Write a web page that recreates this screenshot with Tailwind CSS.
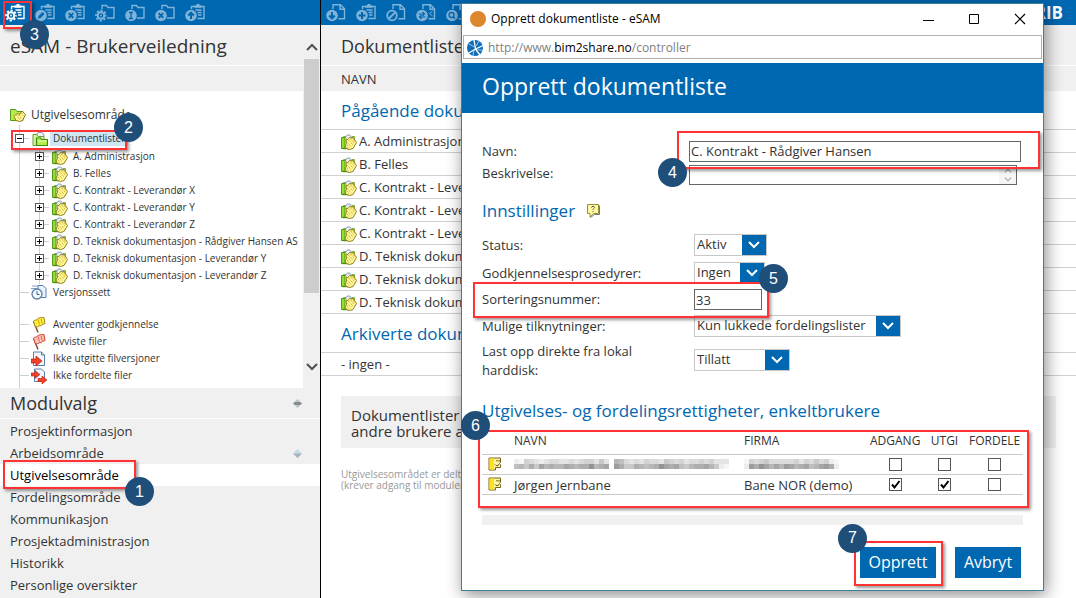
<!DOCTYPE html>
<html lang="no">
<head>
<meta charset="utf-8">
<meta name="viewport" content="width=device-width, initial-scale=1">
<title>eSAM - Brukerveiledning</title>
<script src="https://cdn.jsdelivr.net/npm/@tailwindcss/browser@4"></script>
</head>
<body class="relative flex h-screen overflow-hidden bg-white font-['Open_Sans','Noto_Sans',sans-serif] text-[13px] text-[#333]">

<svg class="hidden" aria-hidden="true">
  <!-- toolbar bases -->
  <symbol id="clip" viewBox="0 0 20 18">
    <path d="M6.500 5V2.500h12.500v12h-6.500" fill="none" stroke="currentColor" stroke-width="1.400"/>
    <path d="M9.500 3.800V1.500h2V0h3v1.500h2v2.300z" fill="currentColor"/>
    <path d="M10.500 6h6M12.500 8.500h4M13 11h3.500" stroke="currentColor" stroke-width="1.300"/>
  </symbol>
  <symbol id="fold" viewBox="0 0 20 18">
    <path d="M7 5V1.500h4.500l1.500 2h6v10.500h-7" fill="none" stroke="currentColor" stroke-width="1.400"/>
  </symbol>
  <symbol id="page" viewBox="0 0 20 18">
    <path d="M7 5V.700h7.500l4 4v10h-6M14 .700v4.500h4.500" fill="none" stroke="currentColor" stroke-width="1.400"/>
  </symbol>
  <symbol id="disc" viewBox="0 0 20 18">
    <circle cx="6" cy="11.500" r="6.500" fill="#0067b1"/><circle cx="6" cy="11.500" r="5.800" fill="currentColor"/>
  </symbol>
  <symbol id="gear" viewBox="0 0 20 18">
    <circle cx="6" cy="11.500" r="6.500" fill="#0067b1"/>
    <circle cx="6" cy="11.500" r="5" fill="none" stroke="currentColor" stroke-width="1.800" stroke-dasharray="2.200 1.727" stroke-dashoffset="1.100"/>
    <circle cx="6" cy="11.500" r="3.300" fill="none" stroke="currentColor" stroke-width="2"/>
    <circle cx="6" cy="11.500" r=".9" fill="currentColor"/>
  </symbol>
  <symbol id="gx" viewBox="0 0 20 18"><path d="M3.700 9.200l4.600 4.600M8.300 9.200l-4.600 4.600" stroke="#0067b1" stroke-width="1.900"/></symbol>

  <!-- green folder with open yellow hand -->
  <symbol id="hand" viewBox="0 0 16 16">
    <path d="M2.500 4V2.500H5M11 2.500h2.500V5" fill="none" stroke="#7fb04a"/>
    <path d="M4.500 4C4.500 0 10.500 0 10.500 4" fill="#e6eef3" stroke="#7c93a8"/>
    <path d="M.500 3.500h3.500v11H.500z" fill="#8fe02c" stroke="#58961c"/>
    <path d="M1.500 14.500h6" stroke="#4b8a17" stroke-width="1.400"/>
    <path d="M4 12l1.500-2.500-.5-4.500 2 .5 1.500-2 2 .5 1.500-1 1 2 2.500 3.500-3.500 6-3.500 1-3-1z" fill="#fff7a0" stroke="#8f7f10" stroke-width="1"/>
    <path d="M7.500 6l4.500 5M9.500 5l4 4.500M6.500 8.500l4 4.500M11.500 4.500l2.500 3.500M6 11l2 2.500" stroke="#c9aa10" stroke-width="1" stroke-dasharray="1.200 .8"/>
  </symbol>
  <symbol id="folderopen" viewBox="0 0 16 16">
    <path d="M4 5C4 0 12 0 12 5" fill="#eef3f6" stroke="#7c93a8"/>
    <path d="M1 3.500h4l1 2h6v3H6l-1 6H1z" fill="#d4f59a" stroke="#6a9a3c"/>
    <path d="M4.500 14.500v-7.500h4l1 1.500h6v6z" fill="#b5f04a" stroke="#3f8a10" stroke-width="1.200"/>
    <path d="M6 10h8.500" stroke="#eaffc4"/>
  </symbol>
  <symbol id="rootf" viewBox="0 0 16 16">
    <path d="M.500 13.500v-11h5l1.500 2h6v9z" fill="#b5e94c" stroke="#58961c"/>
    <path d="M6 13.500l-2-4 3-3 2.500 1 2.500-3.500 3.500 3.500-3 6-3 1z" fill="#fff6a0" stroke="#8f7f10"/>
    <path d="M6.500 8l3.500 5M9 8l2.500 4M11.500 6l2 3" stroke="#c9aa10" stroke-dasharray="1.200 .8"/>
  </symbol>
  <symbol id="chev" viewBox="0 0 12 8"><path d="M1 1l5 5 5-5" fill="none" stroke="currentColor" stroke-width="2"/></symbol>
  <symbol id="face" viewBox="0 0 14 14">
    <path d="M1 1h11.500v4l-1 1.500 1 1.500v2.500h-5v2.500H1z" fill="#fff7a8" stroke="#7a6412"/>
    <path d="M1.500 1.500h4.500v11H1.500z" fill="#ffe020"/>
    <path d="M9 3v1.500M11 3v1.500M7 7.500c1 1.500 2.500 1.500 4 0" fill="none" stroke="#4c3d08"/>
  </symbol>
</svg>

<!-- Left pane -->
<aside class="flex w-[321px] shrink-0 flex-col border-r border-black bg-[#f0f0f0]">
  <div class="relative z-10 flex h-[25px] shrink-0 items-center gap-[10px] bg-[#0067b1] pl-[5px] text-[#7fb3d8]">
    <button aria-label="Opprett dokumentliste" class="text-white"><svg class="h-[18px] w-5"><use href="#clip"/><use href="#gear"/></svg></button>
    <button aria-label="Rediger"><svg class="h-[18px] w-5"><use href="#clip"/><use href="#disc"/><path d="M2.800 14.700l.8-2.800L7.500 8l2 2-3.900 3.900z" fill="#0067b1"/></svg></button>
    <button aria-label="Slett liste"><svg class="h-[18px] w-5"><use href="#clip"/><use href="#disc"/><use href="#gx"/></svg></button>
    <button aria-label="Mappeinnstillinger"><svg class="h-[18px] w-5"><use href="#fold"/><use href="#gear"/></svg></button>
    <button aria-label="Gi nytt navn"><svg class="h-[18px] w-5"><use href="#fold"/><use href="#disc"/><path d="M4 8.500h4M4 14.500h4M6 8.500v6" stroke="#0067b1" stroke-width="1.300"/></svg></button>
    <button aria-label="Slett mappe"><svg class="h-[18px] w-5"><use href="#fold"/><use href="#disc"/><use href="#gx"/></svg></button>
    <button aria-label="Last opp"><svg class="h-[18px] w-5"><use href="#clip"/><use href="#disc"/><path d="M6 15V9.500M3.200 11.500L6 8.700l2.800 2.800" fill="none" stroke="#0067b1" stroke-width="2"/></svg></button>
    <div class="absolute top-px left-[3px] h-7 w-[29px] border-2 border-[#f33] shadow-[2px_2px_3px_rgba(0,0,0,.4)]">
      <span class="absolute -right-[19px] -bottom-[22px] flex size-[29px] items-center justify-center rounded-full bg-[#1f4e79] font-['Liberation_Sans',sans-serif] text-[16px] text-white">3</span>
    </div>
  </div>

  <div class="flex h-[363px] shrink-0">
    <div class="flex min-w-0 flex-1 flex-col bg-white">
      <h1 class="flex h-10 shrink-0 items-center bg-[#f0f0f0] pt-[2px] pl-[10px] text-[19px] whitespace-nowrap">eSAM - Brukerveiledning</h1>
      <div class="mt-px h-[25px] shrink-0 bg-[#f0f0f0]"></div>
      <div class="flex flex-1 flex-col pt-3">
        <div class="flex h-[22px] shrink-0 items-center pt-px pl-[10px] text-[12px]"><svg class="mr-[5px] size-4"><use href="#rootf"/></svg>Utgivelsesområde</div>
        <ul class="ml-[19px] flex-1 border-l border-[#c5d3d6] text-[10px] whitespace-nowrap">
          <li>
            <div class="relative flex h-[23px] items-center pt-1">
              <button aria-label="Lukk" class="-ml-[5px] grid size-[9px] place-items-center border border-[#556] bg-white"><span class="h-px w-[5px] bg-black"></span></button>
              <span class="mr-[3px] h-px w-[5px] bg-[#c5d3d6]"></span>
              <svg class="mr-[2px] size-4"><use href="#folderopen"/></svg>
              <span class="bg-[#cfe6f3] px-[3px] text-[10px]">Dokumentlister</span>
              <div class="absolute top-[5px] -left-[9px] h-5 w-[116px] border-2 border-[#f33] shadow-[2px_2px_3px_rgba(0,0,0,.4)]">
                <span class="absolute -top-[19px] -right-[18px] flex size-[29px] items-center justify-center rounded-full bg-[#1f4e79] font-['Liberation_Sans',sans-serif] text-[16px] text-white">2</span>
              </div>
            </div>
            <ul id="tree" class="ml-[19px] border-l border-[#c5d3d6]"></ul>
          </li>
          <li class="flex h-4 items-center"><span class="mr-[2px] h-px w-[9px] bg-[#c5d3d6]"></span>
            <svg class="mr-[6px] size-4" viewBox="0 0 16 16"><path d="M7 1.500h5l3 3v9H7z" fill="#eaf2fb" stroke="#5d7da8"/><path d="M1 2h6M0 4.500h6" stroke="#7ea2cc"/><circle cx="6" cy="10" r="5" fill="#f4faff" stroke="#5d7da8" stroke-width="1.300"/><path d="M6 7v3.500h2.500" fill="none" stroke="#3c5f93"/></svg>Versjonssett</li>
          <li class="mt-4 flex h-[17px] items-center"><span class="mr-[2px] h-px w-[9px] bg-[#c5d3d6]"></span>
            <svg class="mr-[6px] size-4" viewBox="0 0 16 16"><path d="M2.500 4l4.500 11.500" stroke="#7a5a18" stroke-width="1.500"/><path d="M2.500 4.500c1-2 3-1 4-2.500s2-.5 3-1.500 2 .5 3.500 0l1 6c-1.500 1-2 0-3 1.500s-2 0-3 1-2 .5-3.500 1z" fill="#ffee3a" stroke="#a5841a"/><path d="M7 2.500l1.500 5M10 1.500l1.200 5" stroke="#c9a81c"/></svg>Avventer godkjennelse</li>
          <li class="flex h-[17px] items-center"><span class="mr-[2px] h-px w-[9px] bg-[#c5d3d6]"></span>
            <svg class="mr-[6px] size-4" viewBox="0 0 16 16"><path d="M2.500 4l4.500 11.500" stroke="#8a4a30" stroke-width="1.500"/><path d="M2.500 4.500c1-2 3-1 4-2.500s2-.5 3-1.500 2 .5 3.500 0l1 6c-1.500 1-2 0-3 1.500s-2 0-3 1-2 .5-3.500 1z" fill="#ffc2b8" stroke="#d0402c"/><path d="M7 2.500l1.500 5M10 1.500l1.200 5" stroke="#e0604c"/></svg>Avviste filer</li>
          <li class="flex h-[17px] items-center"><span class="mr-[2px] h-px w-[9px] bg-[#c5d3d6]"></span>
            <svg class="mr-[6px] size-4" viewBox="0 0 16 16"><path d="M2.500 1h8l3 3v10.500h-11z" fill="#f2f7fd" stroke="#5d7da8"/><path d="M10.500 1v3h3" fill="none" stroke="#5d7da8"/><path d="M0 8h5V5l6 5-6 5v-3H0z" fill="#f3402a" stroke="#b81e0e" stroke-width=".7"/></svg>Ikke utgitte filversjoner</li>
          <li class="flex h-[17px] items-center"><span class="mr-[2px] h-px w-[9px] bg-[#c5d3d6]"></span>
            <svg class="mr-[6px] size-4" viewBox="0 0 16 16"><path d="M3.500 1h7l3 3v9.500h-10z" fill="#f2f7fd" stroke="#5d7da8"/><path d="M0 5h4V2.500L9 6.500l-5 4V8H0zM7 10.500h4V8l5 4-5 4v-2.500H7z" fill="#f3402a" stroke="#b81e0e" stroke-width=".6"/></svg>Ikke fordelte filer</li>
        </ul>
      </div>
    </div>
    <!-- scroll bar -->
    <div class="flex w-[17px] shrink-0 flex-col items-center bg-[#f0f0f0] pt-[18px] pb-[17px] text-[#505050]">
      <svg class="h-2 w-3 rotate-180"><use href="#chev"/></svg>
      <div class="mt-2 h-[234px] w-[15px] bg-[#cdcdcd]"></div>
      <svg class="mt-auto h-2 w-3"><use href="#chev"/></svg>
    </div>
  </div>

  <h2 class="flex h-[31px] shrink-0 items-center justify-between border-b border-white pt-px pr-[18px] pl-[10px] text-[18px]">Modulvalg
    <svg class="h-[9px] w-[9px]" viewBox="0 0 9 9"><path d="M4.500 0L9 4.500 4.500 9 0 4.500z" fill="#b5c4cb"/><path d="M0 4.500L2 3h5l2 1.500L7 6H2z" fill="#8b8b8b"/></svg>
  </h2>
  <nav class="flex flex-col pt-[1px] leading-[22px]">
    <a href="#" class="pl-[10px]">Prosjektinformasjon</a>
    <a href="#" class="flex items-center justify-between pr-[18px] pl-[10px]">Arbeidsområde
      <svg class="h-[9px] w-[9px]" viewBox="0 0 9 9"><path d="M4.500 0L9 4.500H0z" fill="#c3dbe5"/><path d="M4.500 9L9 4.500H0z" fill="#9fb4be"/></svg></a>
    <a href="#" class="relative bg-white pl-[10px] text-black">Utgivelsesområde
      <span class="absolute -top-[4px] left-[3px] h-[29px] w-[133px] border-2 border-[#f33] shadow-[2px_2px_3px_rgba(0,0,0,.4)]">
        <span class="absolute -right-[20px] -bottom-[19px] flex size-[29px] items-center justify-center rounded-full bg-[#1f4e79] font-['Liberation_Sans',sans-serif] text-[16px] text-white">1</span>
      </span></a>
    <a href="#" class="pl-[10px]">Fordelingsområde</a>
    <a href="#" class="pl-[10px]">Kommunikasjon</a>
    <a href="#" class="pl-[10px]">Prosjektadministrasjon</a>
    <a href="#" class="pl-[10px]">Historikk</a>
    <a href="#" class="pl-[10px]">Personlige oversikter</a>
  </nav>
</aside>

<!-- Main pane -->
<main class="flex min-w-0 flex-1 flex-col">
  <div class="flex h-[25px] shrink-0 items-center gap-[10px] bg-[#0067b1] pl-[5px] text-[#7fb3d8]">
    <button aria-label="Last ned"><svg class="h-[18px] w-5"><use href="#page"/><use href="#disc"/><path d="M6 8v5.500M3.200 11.500L6 14.300l2.800-2.800" fill="none" stroke="#0067b1" stroke-width="2"/></svg></button>
    <button aria-label="Ny"><svg class="h-[18px] w-5"><use href="#clip"/><use href="#disc"/><path d="M6 8v7M2.500 11.500h7" stroke="#0067b1" stroke-width="2"/></svg></button>
    <button aria-label="Sperr"><svg class="h-[18px] w-5"><use href="#page"/><circle cx="6" cy="11.500" r="6.500" fill="#0067b1"/><circle cx="6" cy="11.500" r="4.800" fill="none" stroke="currentColor" stroke-width="1.800"/><path d="M3 14.500l6-6" stroke="currentColor" stroke-width="1.800"/></svg></button>
    <button aria-label="Bytt"><svg class="h-[18px] w-5"><use href="#page"/><use href="#disc"/><path d="M2.500 10H8M6.500 8l2 2-2 2M9.500 13H4M5.500 11l-2 2 2 2" fill="none" stroke="#0067b1" stroke-width="1.200"/><path d="M16.500 7l-3 2.500 3 2.500" fill="none" stroke="currentColor"/></svg></button>
    <button aria-label="Søk"><svg class="h-[18px] w-5"><use href="#page"/><use href="#disc"/><circle cx="5.500" cy="11" r="2.500" fill="none" stroke="#0067b1" stroke-width="1.300"/><path d="M7 12.500l2 2" stroke="#0067b1" stroke-width="1.500"/></svg></button>
    <span class="mr-[13px] ml-auto text-[17px] leading-none font-bold text-white">RIB</span>
  </div>
  <h2 class="flex h-10 shrink-0 items-center bg-[#f0f0f0] pt-[2px] pl-5 text-[18px]">Dokumentlister</h2>
  <div class="mt-px flex h-[25px] shrink-0 items-center bg-[#f0f0f0] pt-[2px] pl-5">NAVN</div>
  <h3 class="flex h-[39px] shrink-0 items-center border-b border-[#d0d0d0] pt-[2px] pl-5 text-[17px] text-[#0067b1]">Pågående dokumentlister</h3>
  <ul id="lists"></ul>
  <h3 class="flex h-[39px] shrink-0 items-center border-b border-[#d0d0d0] pt-[2px] pl-5 text-[17px] text-[#0067b1]">Arkiverte dokumentlister</h3>
  <p class="flex h-[23px] shrink-0 items-center border-b border-[#d0d0d0] pt-[2px] pl-5">- ingen -</p>
  <p class="mt-5 mr-5 ml-5 flex h-[52px] shrink-0 flex-col justify-center bg-[#f0f0f0] pt-[2px] pl-[10px] text-[15px] leading-4">Dokumentlister er synlige for<br>andre brukere av området</p>
  <p class="mt-[21px] pl-5 text-[10px] leading-[11px] text-[#999]">Utgivelsesområdet er delt<br>(krever adgang til modulen)</p>
</main>

<!-- Pop-up window -->
<section role="dialog" aria-label="Opprett dokumentliste" class="absolute top-[3px] left-[461px] z-20 flex h-[588px] w-[583px] flex-col border border-[#3d7f99] bg-white shadow-[2px_4px_16px_rgba(0,0,0,.45)]">
  <header class="flex h-[31px] shrink-0 items-center pr-[17px] pb-px pl-2 text-[12px] text-black">
    <span class="mr-[5px] size-4 rounded-full bg-[#dc862e]"></span>Opprett dokumentliste - eSAM
    <button aria-label="Minimer" class="mr-[35px] ml-auto"><svg class="size-[11px]"><path d="M0 6.500h11" stroke="#000"/></svg></button>
    <button aria-label="Maksimer" class="mr-[34px]"><svg class="size-[11px]"><path d="M.500 .500h9v9h-9z" fill="none" stroke="#000"/></svg></button>
    <button aria-label="Lukk vindu"><svg class="size-3"><path d="M1 1l10 10M11 1L1 11" stroke="#000" stroke-width="1.200"/></svg></button>
  </header>
  <div class="mx-[1px] flex h-6 shrink-0 items-center border border-[#b0b0b0] pt-px pl-[3px] text-[12px] text-[#808080]">
    <svg class="mr-[5px] size-4" viewBox="0 0 16 16"><circle cx="8" cy="8" r="8" fill="#0f6cb5"/><path d="M8.500 9L7 0M8.500 9L16 5.500M8.500 9L1 13.500M8.500 9l4.500 6" stroke="#fff" stroke-width="1.300"/><path d="M7.500 7L2 4M7 10l-1 6M10.500 9.500l5.500 1M9 6l3-5" stroke="#cfe2f2" stroke-width=".8"/></svg>
    <span>http://www.<span class="text-black">bim2share.no</span>/controller</span>
  </div>
  <h2 class="mt-1 flex h-[50px] shrink-0 items-center bg-[#0067b1] pb-1 pl-5 text-[23px] text-white">Opprett dokumentliste</h2>

  <form class="flex flex-1 flex-col px-5" onsubmit="return false">
    <div class="relative mt-[27px] flex h-[22px] items-center">
      <label for="navn" class="w-[207px] shrink-0 pt-px">Navn:</label>
      <input id="navn" type="text" value="C. Kontrakt - Rådgiver Hansen" class="h-[21px] w-[332px] border border-[#666] px-px">
      <div class="pointer-events-none absolute -top-[9px] left-[195px] z-10 h-[38px] w-[363px] border-2 border-[#f33] shadow-[2px_2px_3px_rgba(0,0,0,.4)]">
        <span class="absolute -bottom-[20px] -left-[21px] flex size-[29px] items-center justify-center rounded-full bg-[#1f4e79] font-['Liberation_Sans',sans-serif] text-[16px] text-white">4</span>
      </div>
    </div>
    <div class="mt-[3px] flex h-[21px] items-start">
      <label for="besk" class="w-[207px] shrink-0 leading-4">Beskrivelse:</label>
      <div class="flex h-5 w-[328px] border border-[#666]">
        <textarea id="besk" class="h-full min-w-0 flex-1 resize-none overflow-hidden"></textarea>
        <div class="flex w-[17px] flex-col items-center justify-between bg-[#f5f5f5] py-[2px] text-[#b0b0b0]"><svg class="h-[5px] w-2 rotate-180"><use href="#chev"/></svg><svg class="h-[5px] w-2"><use href="#chev"/></svg></div>
      </div>
    </div>
    <h3 class="mt-3 flex h-[26px] items-center text-[17px] text-[#0067b1]">Innstillinger
      <svg class="ml-3 h-[14px] w-[13px]" viewBox="0 0 13 14"><path d="M.500 .500h11v9H6.500l-3.500 3.500v-3.500H.500z" fill="#fff9a0" stroke="#9a8c3c"/><path d="M3.500 13.500l4-3h5V1.500" fill="none" stroke="#555" stroke-width=".8"/><path d="M4.500 3.500c0-1.500 3-1.500 3 0 0 1-1.500 1-1.500 2.200M6 7v1" fill="none" stroke="#555"/></svg>
    </h3>
    <div class="mt-[10px] flex h-[22px] items-center">
      <label for="status" class="w-[212px] pt-px">Status:</label>
      <span class="relative h-[22px] w-[73px] border border-[#c8c8c8]"><select id="status" class="size-full appearance-none pr-6 pl-[2px]"><option>Aktiv</option></select><span class="pointer-events-none absolute inset-y-0 right-0 grid w-6 place-items-center bg-[#0067b1] text-white"><svg class="h-2 w-3"><use href="#chev"/></svg></span></span>
    </div>
    <div class="mt-[6px] flex h-[22px] items-center">
      <label for="godkj" class="w-[212px] pt-px">Godkjennelsesprosedyrer:</label>
      <span class="relative h-[22px] w-[71px] border border-[#c8c8c8]"><select id="godkj" class="size-full appearance-none pr-6 pl-[2px]"><option>Ingen</option></select><span class="pointer-events-none absolute inset-y-0 right-0 grid w-6 place-items-center bg-[#0067b1] text-white"><svg class="h-2 w-3"><use href="#chev"/></svg></span></span>
    </div>
    <div class="relative mt-[5px] flex h-[21px] items-center">
      <label for="sort" class="w-[212px] pt-px">Sorteringsnummer:</label>
      <input id="sort" type="text" value="33" class="h-[21px] w-[68px] border border-[#666] px-px">
      <div class="pointer-events-none absolute -top-[7px] -left-[9px] z-10 h-[36px] w-[296px] border-2 border-[#f33] shadow-[2px_2px_3px_rgba(0,0,0,.4)]">
        <span class="absolute -top-[20px] -right-[21px] flex size-[29px] items-center justify-center rounded-full bg-[#1f4e79] font-['Liberation_Sans',sans-serif] text-[16px] text-white">5</span>
      </div>
    </div>
    <div class="mt-[5px] flex h-[22px] items-center">
      <label for="tilk" class="w-[212px] pt-px">Mulige tilknytninger:</label>
      <span class="relative h-[22px] w-[207px] border border-[#c8c8c8]"><select id="tilk" class="size-full appearance-none pr-6 pl-[2px]"><option>Kun lukkede fordelingslister</option></select><span class="pointer-events-none absolute inset-y-0 right-0 grid w-6 place-items-center bg-[#0067b1] text-white"><svg class="h-2 w-3"><use href="#chev"/></svg></span></span>
    </div>
    <div class="mt-1 flex h-[38px] items-center">
      <label for="last" class="w-[212px] pt-px pr-8 leading-[19px]">Last opp direkte fra lokal harddisk:</label>
      <span class="relative h-[22px] w-[96px] border border-[#c8c8c8]"><select id="last" class="size-full appearance-none pr-6 pl-[2px]"><option>Tillatt</option></select><span class="pointer-events-none absolute inset-y-0 right-0 grid w-6 place-items-center bg-[#0067b1] text-white"><svg class="h-2 w-3"><use href="#chev"/></svg></span></span>
    </div>
    <h3 class="mt-[19px] flex h-[26px] items-center text-[17px] whitespace-nowrap text-[#0067b1]">Utgivelses- og fordelingsrettigheter, enkeltbrukere</h3>

    <div class="relative mt-1">
      <table class="w-full table-fixed border-collapse text-left">
        <thead>
          <tr class="h-[26px] border-b border-[#c8c8c8] text-[12px]">
            <th class="w-8"></th><th class="font-normal">NAVN</th><th class="w-[126px] font-normal">FIRMA</th>
            <th class="w-[50px] text-center font-normal">ADGANG</th><th class="w-[49px] text-center font-normal">UTGI</th><th class="w-[50px] text-center font-normal">FORDELE</th><th class="w-1"></th>
          </tr>
        </thead>
        <tbody>
          <tr class="h-5 border-b border-[#c8c8c8]">
            <td><svg class="ml-[6px] size-[14px]"><use href="#face"/></svg></td>
            <td><svg id="mask1" class="h-[10px] w-[220px]" shape-rendering="crispEdges" role="img" aria-label="Skjult navn"></svg></td>
            <td><svg id="mask2" class="h-[10px] w-[95px]" shape-rendering="crispEdges" role="img" aria-label="Skjult firma"></svg></td>
            <td><input type="checkbox" aria-label="Adgang" class="mx-auto block size-[13px] appearance-none border border-[#555] bg-white"></td>
            <td><input type="checkbox" aria-label="Utgi" class="mx-auto block size-[13px] appearance-none border border-[#555] bg-white"></td>
            <td><input type="checkbox" aria-label="Fordele" class="mx-auto block size-[13px] appearance-none border border-[#555] bg-white"></td><td></td>
          </tr>
          <tr class="h-[19px] border-b border-[#c8c8c8] leading-[18px]">
            <td><svg class="ml-[6px] size-[14px]"><use href="#face"/></svg></td>
            <td class="pt-px">Jørgen Jernbane</td><td class="pt-px whitespace-nowrap">Bane NOR (demo)</td>
            <td><span class="mx-auto grid size-[13px]"><input type="checkbox" checked aria-label="Adgang" class="peer col-start-1 row-start-1 size-[13px] appearance-none border border-[#555] bg-white"><svg class="pointer-events-none col-start-1 row-start-1 hidden size-[13px] peer-checked:block"><path d="M3 6.500l2.500 3 5-6.500" fill="none" stroke="#000" stroke-width="2"/></svg></span></td>
            <td><span class="mx-auto grid size-[13px]"><input type="checkbox" checked aria-label="Utgi" class="peer col-start-1 row-start-1 size-[13px] appearance-none border border-[#555] bg-white"><svg class="pointer-events-none col-start-1 row-start-1 hidden size-[13px] peer-checked:block"><path d="M3 6.500l2.500 3 5-6.500" fill="none" stroke="#000" stroke-width="2"/></svg></span></td>
            <td><input type="checkbox" aria-label="Fordele" class="mx-auto block size-[13px] appearance-none border border-[#555] bg-white"></td><td></td>
          </tr>
        </tbody>
      </table>
      <div class="pointer-events-none absolute top-[2px] -left-[4px] h-[78px] w-[551px] border-2 border-[#f33] shadow-[2px_2px_3px_rgba(0,0,0,.4)]">
        <span class="absolute -top-[21px] -left-[19px] flex size-[29px] items-center justify-center rounded-full bg-[#1f4e79] font-['Liberation_Sans',sans-serif] text-[16px] text-white">6</span>
      </div>
    </div>
    <div class="mt-5 h-[10px] bg-[#f0f0f0]"></div>
    <div class="mt-[22px] flex justify-end gap-[19px] pr-[2px] text-[16px] text-white">
      <div class="relative">
        <button type="submit" class="h-[31px] w-[76px] bg-[#0067b1]">Opprett</button>
        <div class="pointer-events-none absolute -top-[6px] -left-[6px] h-[45px] w-[89px] border-2 border-[#f33] shadow-[2px_2px_3px_rgba(0,0,0,.4)]">
          <span class="absolute -top-[19px] -left-[18px] flex size-[29px] items-center justify-center rounded-full bg-[#1f4e79] font-['Liberation_Sans',sans-serif] text-[16px] text-white">7</span>
        </div>
      </div>
      <button type="button" class="h-[31px] w-[66px] bg-[#0067b1]">Avbryt</button>
    </div>
  </form>
</section>

<script>
const names = ["A. Administrasjon","B. Felles","C. Kontrakt - Leverandør X","C. Kontrakt - Leverandør Y","C. Kontrakt - Leverandør Z","D. Teknisk dokumentasjon - Rådgiver Hansen AS","D. Teknisk dokumentasjon - Leverandør Y","D. Teknisk dokumentasjon - Leverandør Z"];
document.getElementById("tree").innerHTML = names.map(n => `<li class="flex h-[17px] items-center"><button aria-label="Utvid" class="-ml-[5px] grid size-[9px] shrink-0 place-items-center border border-[#556] bg-white"><svg class="size-[5px]"><path d="M0 2.500h5M2.500 0v5" stroke="#000"/></svg></button><span class="mr-[3px] h-px w-[5px] bg-[#c5d3d6]"></span><svg class="mr-[5px] size-4 shrink-0"><use href="#hand"/></svg>${n}</li>`).join("");
document.getElementById("lists").innerHTML = names.map(n => `<li class="flex h-[23px] items-center border-b border-[#d0d0d0] pt-[2px] pl-5"><svg class="mr-[2px] size-4 shrink-0"><use href="#hand"/></svg><a href="#">${n}</a></li>`).join("");
// pixelated privacy masks, 5px blocks in two rows
function mask(id, a, b) {
  document.getElementById(id).innerHTML = [a, b].map((row, y) => [...row].map((c, x) => {
    const v = 255 - parseInt(c, 16) * 9;
    return `<rect x="${x * 5}" y="${y * 5}" width="5" height="5" fill="rgb(${v},${v},${v})"/>`;
  }).join("")).join("");
}
mask("mask1", "2154323443343455363087434354436545344545333", "78696a8988a9899c89a0b96698789ca9a76899a8621");
mask("mask2", "1545644444535464521", "2b9ca8a8ba89a78ab92");
</script>
</body>
</html>
